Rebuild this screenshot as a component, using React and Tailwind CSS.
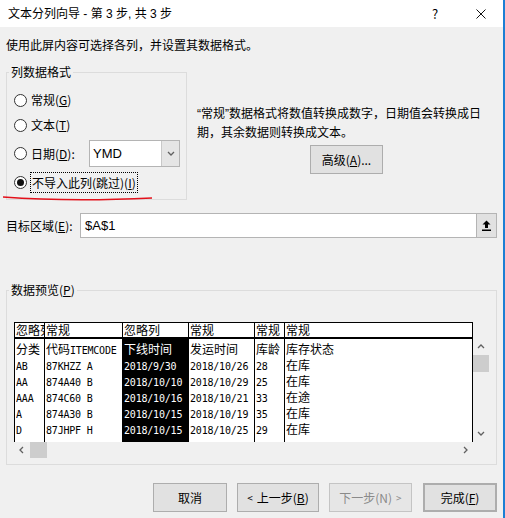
import React from 'react';

const ui = "font-['Noto_Sans_CJK_SC',sans-serif]";
const latin = "font-['Liberation_Sans',sans-serif]";

const columns = [
  { head: '忽略列', width: 'w-[30px]', black: false, cells: ['分类', 'AB', 'AA', 'AAA', 'A', 'D'] },
  { head: '常规', width: 'w-[78px]', black: false, cells: ['代码ITEMCODE', '87KHZZ A', '874A40 B', '874C60 B', '874A30 B', '87JHPF H'] },
  { head: '忽略列', width: 'w-[66px]', black: true, cells: ['下线时间', '2018/9/30', '2018/10/10', '2018/10/16', '2018/10/15', '2018/10/15'] },
  { head: '常规', width: 'w-[66px]', black: false, cells: ['发运时间', '2018/10/26', '2018/10/29', '2018/10/21', '2018/10/19', '2018/10/25'] },
  { head: '常规', width: 'w-[30px]', black: false, cells: ['库龄', '28', '25', '33', '35', '29'] },
  { head: '常规', width: 'w-[189px] border-r', black: false, cells: ['库存状态', '在库', '在库', '在途', '在库', '在库'] },
];

// ascii in a narrow mono face, CJK at 12px, like the SimSun preview grid
function Mixed({ text }) {
  const parts = text.match(/[\x00-\xff]+|[^\x00-\xff]+/g) || [];
  return parts.map((p, i) =>
    /^[\x00-\xff]/.test(p) ? (
      <span key={i} className="font-['DejaVu_Sans_Mono',monospace] text-[10px] tracking-[-0.2px]">{p}</span>
    ) : (
      <span key={i} className={`${ui} text-[12px]`}>{p}</span>
    )
  );
}

function Radio({ checked }) {
  return (
    <span className="w-[13px] h-[13px] rounded-full border border-[#333333] bg-white flex items-center justify-center shrink-0">
      {checked && <span className="w-[7px] h-[7px] rounded-full bg-[#111111]" />}
    </span>
  );
}

function Chevron({ dir }) {
  const d = {
    up: 'M1 5 L4 2 L7 5',
    down: 'M1 2 L4 5 L7 2',
    left: 'M5 1 L2 4 L5 7',
    right: 'M3 1 L6 4 L3 7',
  }[dir];
  return (
    <svg width="8" height="8" viewBox="0 0 8 8">
      <path d={d} fill="none" stroke="#606060" strokeWidth="1.3" />
    </svg>
  );
}

function Btn({ children, className = '' }) {
  return (
    <button className={`h-[29px] bg-[#e1e1e1] border border-[#adadad] flex items-center justify-center text-[12px] ${className}`}>
      {children}
    </button>
  );
}

export default function App() {
  return (
    <div className={`relative w-[505px] h-[518px] bg-[#f0f0f0] border-r-2 border-[#1c7fd4] overflow-hidden text-[12px] leading-[18px] text-black ${ui}`}>
      {/* Title bar */}
      <div className="h-[27px] bg-white flex items-center pl-[8px] pr-[17px]">
        <span>
          文本分列向导<span className={`${latin} whitespace-pre`}> - </span>第<span className={`${latin} whitespace-pre`}> 3 </span>步<span className={latin}>, </span>共<span className={`${latin} whitespace-pre`}> 3 </span>步
        </span>
        <div className="ml-auto flex items-center">
          <span className="w-[16px] text-center text-[13px]">?</span>
          <svg className="ml-[33px]" width="10" height="10" viewBox="0 0 10 10">
            <path d="M0.5 0.5 L9.5 9.5 M9.5 0.5 L0.5 9.5" stroke="#111" strokeWidth="1" />
          </svg>
        </div>
      </div>

      <div className="px-[6px]">
        <div className="pt-[9px]">使用此屏内容可选择各列，并设置其数据格式。</div>

        {/* Format group + description */}
        <div className="flex mt-[9px]">
          <fieldset className="w-[181px] border border-[#dcdcdc] p-0 m-0">
            <legend className="ml-[2px] px-[2px] leading-[18px]">列数据格式</legend>
            <div className="pl-[7px] pr-[6px] pt-[7px] pb-[6px]">
              <div className="flex items-center h-[24px]">
                <Radio />
                <span className="ml-[4px]">常规(<span className="underline">G</span>)</span>
              </div>
              <div className="flex items-center h-[24px] mt-[1px]">
                <Radio />
                <span className="ml-[4px]">文本(<span className="underline">T</span>)</span>
              </div>
              <div className="flex items-center h-[27px] mt-[3px]">
                <Radio />
                <span className="ml-[4px]">日期(<span className="underline">D</span>):</span>
                <div className="ml-auto w-[91px] h-[27px] bg-white border border-[#b4b4b4] flex">
                  <span className={`flex-1 pl-[3px] flex items-center text-[13px] ${latin}`}>YMD</span>
                  <span className="w-[18px] bg-[#e5e5e5] border-l border-[#c8c8c8] flex items-center justify-center">
                    <Chevron dir="down" />
                  </span>
                </div>
              </div>
              <div className="flex items-center h-[21px] mt-[5px]">
                <Radio checked />
                <span className="ml-[3px] h-[21px] px-[1px] border border-dotted border-black flex items-center">
                  不导入此列(跳过)(<span className="underline">I</span>)
                </span>
              </div>
            </div>
          </fieldset>

          <div className="ml-[10px] mt-[41px] leading-[17px]">
            <div className="whitespace-nowrap">
              <span className={latin}>“</span>常规<span className={latin}>”</span>数据格式将数值转换成数字，日期值会转换成日
              <br />
              期，其余数据则转换成文本。
            </div>
            <Btn className="ml-[113px] mt-[5px] w-[73px] h-[28px]">
              高级(<span className="underline">A</span>)...
            </Btn>
          </div>
        </div>

        {/* Destination */}
        <div className="flex items-center h-[25px] mt-[13px]">
          <span className="w-[74px]">目标区域(<span className="underline">E</span>):</span>
          <div className="flex-1 h-[25px] bg-white border border-[#b4b4b4] flex">
            <span className={`flex-1 pl-[4px] flex items-center text-[13px] ${latin}`}>$A$1</span>
            <span className="w-[20px] bg-[#e1e1e1] border-l border-[#b4b4b4] flex items-center justify-center">
              <svg width="9" height="11" viewBox="0 0 9 11">
                <path d="M4.5 0.5 L8.5 4.5 H6 V8 H3 V4.5 H0.5 Z" fill="#000" />
                <rect x="0" y="9.5" width="9" height="1.5" fill="#000" />
              </svg>
            </span>
          </div>
        </div>

        {/* Preview */}
        <fieldset className="mt-[43px] border border-[#dcdcdc] p-0 m-0">
          <legend className="ml-[2px] px-[2px] leading-[18px]">数据预览(<span className="underline">P</span>)</legend>
          <div className="pl-[7px] pt-[23px] pb-[6px]">
            <div className="flex">
              <div className="flex">
                {columns.map((col, ci) => (
                  <div key={ci} className={`${col.width} border-l border-black overflow-hidden shrink-0`}>
                    <div className="h-[17px] bg-white border-t border-b-2 border-black leading-[14px] whitespace-nowrap overflow-hidden pl-[1px]">
                      <span className={`${ui} text-[12px]`}>{col.head}</span>
                    </div>
                    <div className={`h-[103px] pt-[2px] pl-[1px] ${col.black ? 'bg-black text-white' : 'bg-white text-black'}`}>
                      {col.cells.map((c, ri) => (
                        <div key={ri} className="h-[16px] leading-[16px] whitespace-pre overflow-hidden">
                          <Mixed text={c} />
                        </div>
                      ))}
                    </div>
                  </div>
                ))}
              </div>
              {/* vertical scrollbar */}
              <div className="w-[16px] flex flex-col">
                <div className="h-[17px]" />
                <div className="h-[16px] flex items-center justify-center">
                  <Chevron dir="up" />
                </div>
                <div className="h-[17px] bg-[#cdcdcd]" />
                <div className="flex-1" />
                <div className="h-[16px] flex items-center justify-center">
                  <Chevron dir="down" />
                </div>
              </div>
            </div>
            {/* horizontal scrollbar */}
            <div className="w-[459px] h-[16px] flex">
              <div className="w-[16px] flex items-center justify-center">
                <Chevron dir="left" />
              </div>
              <div className="w-[17px] bg-[#cdcdcd]" />
              <div className="flex-1" />
              <div className="w-[16px] flex items-center justify-center">
                <Chevron dir="right" />
              </div>
            </div>
          </div>
        </fieldset>

        {/* Footer buttons */}
        <div className="flex justify-end mt-[18px]">
          <Btn className="w-[74px]">取消</Btn>
          <Btn className="w-[82px] ml-[10px]">
            <span className="text-[10px] mr-[4px]">&lt;</span>上一步(<span className="underline">B</span>)
          </Btn>
          <Btn className="w-[83px] ml-[10px] bg-[#e6e6e6] border-[#c4c4c4] text-[#8a8a8a]">
            下一步(N)<span className="text-[10px] ml-[4px]">&gt;</span>
          </Btn>
          <Btn className="w-[74px] ml-[11px] border-2 border-[#0078d7]">
            完成(<span className="underline">F</span>)
          </Btn>
        </div>
      </div>

      {/* hand-drawn red underline */}
      <svg className="absolute left-0 top-[192px] pointer-events-none" width="160" height="12" viewBox="0 0 160 12">
        <path d="M3 5 Q 70 10 152 6" fill="none" stroke="#e3101a" strokeWidth="1.5" />
      </svg>
    </div>
  );
}
